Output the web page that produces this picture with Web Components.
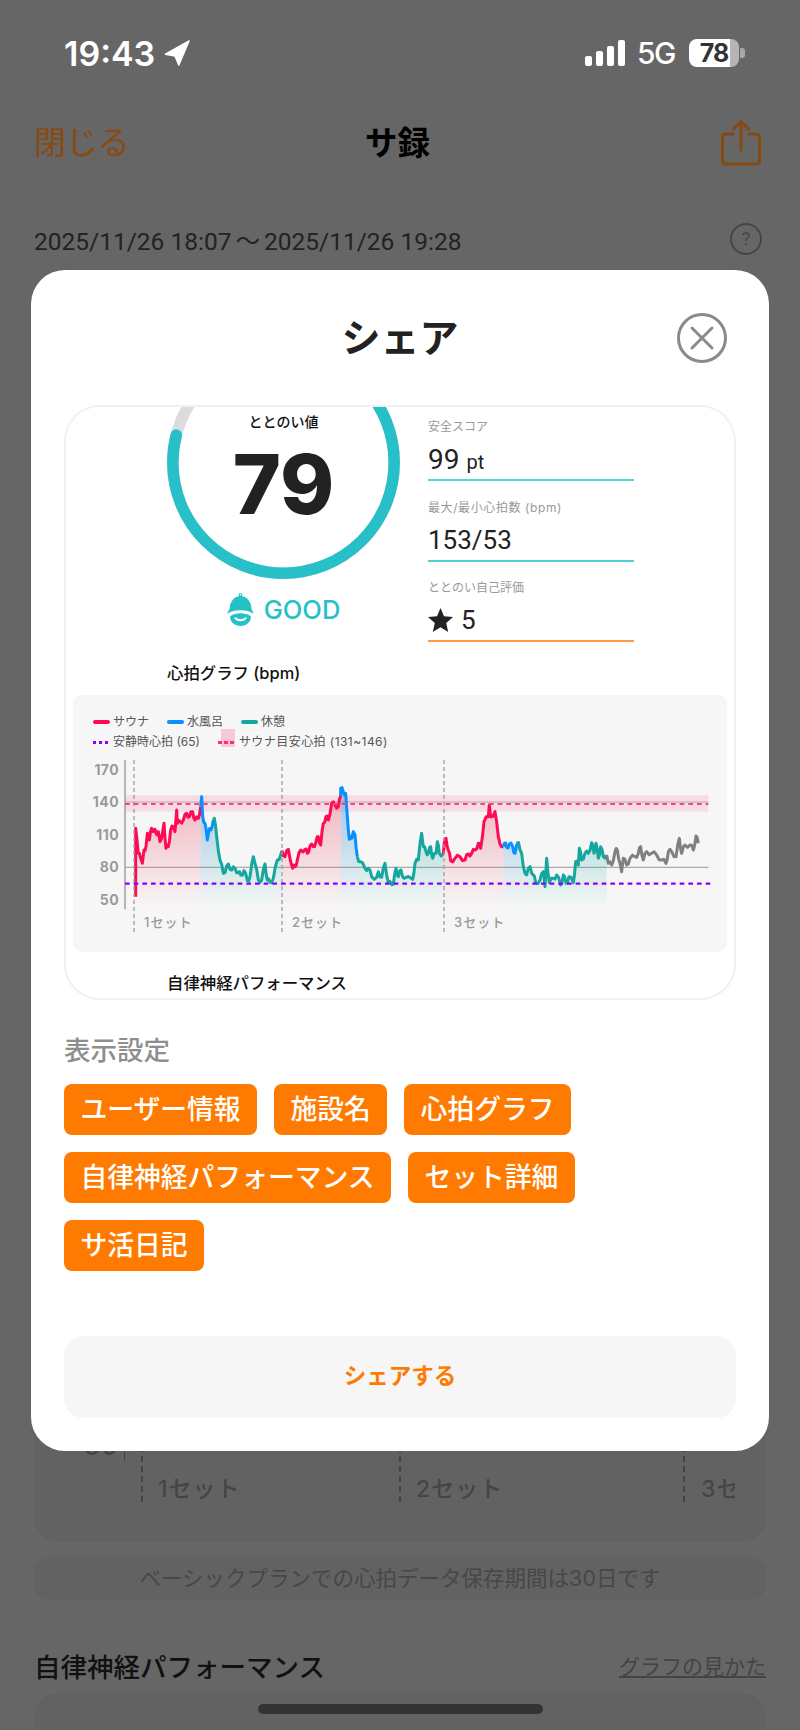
<!DOCTYPE html>
<html lang="ja">
<head>
<meta charset="utf-8">
<title>シェア</title>
<style>
  html, body { margin: 0; padding: 0; }
  body {
    width: 800px;
    height: 1730px;
    overflow: hidden;
    background: #666;
    font-family: Inter, "Noto Sans CJK JP", sans-serif;
  }
</style>
</head>
<body>
<session-screen>
  <share-modal></share-modal>
</session-screen>

<script>
const statusTemplate = document.createElement('template');
statusTemplate.innerHTML = /*html*/ `
  <style>
    :host { display: flex; align-items: center; height: 106px; padding: 0 55px 0 64px; color: #fff; box-sizing: border-box; }
    .time { font-size: 34px; font-weight: 600; }
    .arrow { margin-left: 9px; }
    .right { margin-left: auto; display: flex; align-items: center; }
    .net { font-size: 30px; margin: 0 14px 0 12px; font-weight: 500; letter-spacing: -1.5px; }
    .battery {
      position: relative; width: 50px; height: 28px; border-radius: 8px; overflow: hidden;
      background: linear-gradient(90deg, #fff 0 41px, #b5b5b5 41px);
      color: #333; font-size: 25px; font-weight: 700; line-height: 28px; text-align: center; letter-spacing: -1px;
    }
    .nub { width: 5px; height: 10px; background: #a8a8a8; border-radius: 0 3px 3px 0; margin-left: 1px; }
  </style>
  <span class="time">19:43</span>
  <svg class="arrow" width="26" height="26" viewBox="0 0 26 26"><path d="M25 1 1.500 14.200 11 16l3.800 9z" fill="#fff" stroke="#fff" stroke-width="1.500" stroke-linejoin="round"/></svg>
  <div class="right">
    <svg width="40" height="26" viewBox="0 0 40 26" fill="#fff">
      <rect x="0" y="16" width="7" height="10" rx="2"/>
      <rect x="11" y="11" width="7" height="15" rx="2"/>
      <rect x="22" y="6" width="7" height="20" rx="2"/>
      <rect x="33" y="0" width="7" height="26" rx="2"/>
    </svg>
    <span class="net">5G</span>
    <div class="battery">78</div>
    <div class="nub"></div>
  </div>
`;
class StatusBar extends HTMLElement {
  constructor() {
    super();
    this.attachShadow({ mode: 'open' }).appendChild(statusTemplate.content.cloneNode(true));
  }
}
customElements.define('status-bar', StatusBar);

const navTemplate = document.createElement('template');
navTemplate.innerHTML = /*html*/ `
  <style>
    :host { display: grid; grid-template-columns: 1fr auto 1fr; align-items: center; height: 74px; padding: 0 39px 0 34px; }
    .close { font-size: 32px; color: #8a4a0f; padding-bottom: 6px; }
    .title { font-size: 32.500px; font-weight: 700; color: #000; padding-bottom: 6px; }
    svg { justify-self: end; }
  </style>
  <span class="close">閉じる</span>
  <span class="title">サ録</span>
  <svg width="40" height="48" viewBox="0 0 40 48" fill="none" stroke="#844a10" stroke-width="3" stroke-linecap="round" stroke-linejoin="round">
    <path d="M12 15H5q-3.500 0-3.500 3.500v23q0 3.500 3.500 3.500h30q3.500 0 3.500-3.500v-23q0-3.500-3.500-3.500h-7"/>
    <path d="M20 31V3M12.500 10 20 2.500 27.500 10"/>
  </svg>
`;
class NavBar extends HTMLElement {
  constructor() {
    super();
    this.attachShadow({ mode: 'open' }).appendChild(navTemplate.content.cloneNode(true));
  }
}
customElements.define('nav-bar', NavBar);

const screenTemplate = document.createElement('template');
screenTemplate.innerHTML = /*html*/ `
  <style>
    :host { display: block; position: relative; width: 800px; height: 1730px; overflow: hidden; background: #666; }
    .date { display: flex; align-items: center; justify-content: space-between; height: 32px; margin: 43px 38px 0 34px; color: #222; font-size: 24.500px; font-family: Roboto, "Noto Sans CJK JP", sans-serif; }
    .tilde { margin: 0 4px; }
    .help { width: 28px; height: 28px; border: 2px solid #464646; border-radius: 50%; color: #464646; font-size: 19px; line-height: 28px; text-align: center; }
    .graph { position: relative; height: 1265px; margin: 22px 34px 0; background: #626262; border-radius: 24px; overflow: hidden; }
    .graph span { position: absolute; color: #454545; font-size: 23px; font-weight: 500; line-height: 28px; white-space: nowrap; letter-spacing: 1px; }
    .graph i { position: absolute; top: 0; height: 1225px; border-left: 2px dashed #444; }
    .graph b { position: absolute; left: 90px; top: 1150px; height: 34px; width: 1px; background: #444; }
    .note { margin: 15px 34px 0; height: 43px; line-height: 43px; text-align: center; background: #626262; border-radius: 16px; color: #474747; font-size: 21.500px; }
    .head { display: flex; align-items: center; justify-content: space-between; margin: 45px 34px 0; height: 40px; }
    .head strong { font-size: 26.500px; font-weight: 500; color: #111; }
    .head a { font-size: 21px; color: #444; text-decoration: underline; }
    .next { margin: 8px 34px 0; height: 60px; background: #626262; border-radius: 24px 24px 0 0; }
    .home { position: absolute; left: 258px; top: 1704px; width: 285px; height: 10px; border-radius: 5px; background: #333; }
  </style>
  <status-bar></status-bar>
  <nav-bar></nav-bar>
  <div class="date">
    <span>2025/11/26 18:07<span class="tilde">～</span>2025/11/26 19:28</span>
    <span class="help">?</span>
  </div>
  <div class="graph">
    <span style="left:50px;top:1155px;font-size:26px">50</span>
    <b></b>
    <i style="left:107px"></i><i style="left:365px"></i><i style="left:649px"></i>
    <span style="left:124px;top:1198px">1セット</span>
    <span style="left:382px;top:1198px">2セット</span>
    <span style="left:667px;top:1198px;width:34px;overflow:hidden">3セット</span>
  </div>
  <div class="note">ベーシックプランでの心拍データ保存期間は30日です</div>
  <div class="head"><strong>自律神経パフォーマンス</strong><a>グラフの見かた</a></div>
  <div class="next"></div>
  <slot></slot>
  <div class="home"></div>
`;
class SessionScreen extends HTMLElement {
  constructor() {
    super();
    this.attachShadow({ mode: 'open' }).appendChild(screenTemplate.content.cloneNode(true));
  }
}
customElements.define('session-screen', SessionScreen);

const statTemplate = document.createElement('template');
statTemplate.innerHTML = /*html*/ `
  <style>
    :host { display: block; width: 206px; height: 63px; box-sizing: border-box; border-bottom: 2px solid var(--line, #5ad6d6); }
    .label { height: 17px; font-size: 12px; line-height: 17px; color: #999; white-space: nowrap; letter-spacing: var(--label-spacing, 0); }
    .value { display: flex; align-items: center; gap: 8px; height: 38px; margin-top: 5px; font-size: 26px; color: #222; font-family: Roboto, sans-serif; }
  </style>
  <div class="label"></div>
  <div class="value"><slot></slot></div>
`;
class StatItem extends HTMLElement {
  constructor() {
    super();
    this.attachShadow({ mode: 'open' }).appendChild(statTemplate.content.cloneNode(true));
  }

  connectedCallback() {
    this.shadowRoot.querySelector('.label').textContent = this.getAttribute('label');
  }
}
customElements.define('stat-item', StatItem);

const scoreTemplate = document.createElement('template');
scoreTemplate.innerHTML = /*html*/ `
  <style>
    :host { display: flex; gap: 28px; padding-left: 101px; }
    .left { width: 233px; margin-top: -61px; }
    .ring { position: relative; width: 233px; height: 233px; }
    .ring svg { display: block; }
    .caption { position: absolute; left: 0; right: 0; top: 66px; text-align: center; font-size: 14px; font-weight: 500; line-height: 20px; color: #111; }
    .num { position: absolute; left: 0; right: 0; top: 89px; text-align: center; font-size: 82px; font-weight: 800; line-height: 100px; color: #222; }
    .good { display: flex; align-items: center; justify-content: center; gap: 10px; margin-top: 14px; color: #26c0c8; font-size: 25.500px; font-weight: 500; }
    .stats { display: flex; flex-direction: column; gap: 17.500px; margin-top: 11px; }
    .big { font-size: 28px; }
    small { font-size: 20px; }
  </style>
  <div class="left">
    <div class="ring">
      <svg width="233" height="233" viewBox="0 0 233 233" fill="none" stroke-width="11.500">
        <circle cx="116.500" cy="116.500" r="110.700" stroke="#dcdcdc"/>
        <circle cx="116.500" cy="116.500" r="110.700" stroke="#28c0c8" stroke-linecap="round" pathLength="100" stroke-dasharray="79 100" transform="rotate(-90 116.500 116.500)"/>
      </svg>
      <div class="caption">ととのい値</div>
      <div class="num">79</div>
    </div>
    <div class="good">
      <svg width="27" height="33" viewBox="0 0 26 32" fill="#26c0c8">
        <circle cx="13" cy="1.800" r="1.300" fill="none" stroke="#26c0c8" stroke-width="1"/>
        <path d="M2.500 15A10.500 12 0 0 1 23.500 15L26 20C19 15.500 7 15.500 0 20z"/>
        <path d="M3 22.500C9 18.800 17 18.800 23 22.500 23.500 28 18.500 32 13 32 7.500 32 2.500 28 3 22.500z"/>
        <path d="M8 24.500c2.500 2.500 7.500 2.500 10 0" fill="none" stroke="#fff" stroke-width="1.800" stroke-linecap="round"/>
      </svg>
      <span>GOOD</span>
    </div>
  </div>
  <div class="stats">
    <stat-item label="安全スコア" style="--line:#5ad6d6"><span class="big">99 <small>pt</small></span></stat-item>
    <stat-item label="最大/最小心拍数 (bpm)" style="--line:#4fd0d0;--label-spacing:.6px">153/53</stat-item>
    <stat-item label="ととのい自己評価" style="--line:#ff9a45">
      <svg width="25" height="24" viewBox="0 0 25 24"><path d="M12.500 0l3.500 8.300 9 .8-6.800 5.900 2 8.900-7.700-4.700-7.700 4.700 2-8.900L0 9.100l9-.8z" fill="#222"/></svg>
      <span>5</span>
    </stat-item>
  </div>
`;
class ScorePanel extends HTMLElement {
  constructor() {
    super();
    this.attachShadow({ mode: 'open' }).appendChild(scoreTemplate.content.cloneNode(true));
  }
}
customElements.define('score-panel', ScorePanel);

// curve points are x,y measured off the picture at 3x, the svg viewBox uses the same units
const SEGMENTS = [
  ['red', '197,620 197,415 200,440 205,490 212,505 217,520 222,480 228,470 232,430 238,450 245,415 252,420 258,430 265,425 270,455 278,425 282,400 288,475 295,470 302,420 310,410 315,425 320,360 322,400 330,395 340,390 350,370 358,380 368,365 375,390 385,385 392,350'],
  ['blue', '392,350 395,320 398,380 405,400 412,450 416,425 422,420 430,390'],
  ['teal', '430,390 433,385 440,440 450,510 460,550 465,548 475,522 485,540 495,535 505,548 512,555 522,542 532,572 540,560 550,500 555,520 565,570 575,570 585,522 592,570 600,577 610,565 622,510 632,495 636,482'],
  ['red', '636,482 645,500 655,478 668,535 675,530 682,510 692,480 705,478 712,490 720,468 730,470 738,455 745,440 752,465 760,400 768,380 775,390 785,340 795,345 805,350 812,318'],
  ['blue', '812,318 812,295 820,305 827,310 832,380 838,448 845,445 850,425 855,435 862,500'],
  ['teal', '862,500 870,515 885,535 895,535 905,560 920,562 925,545 935,562 945,520 955,578 965,584 970,583 978,535 985,560 993,540 1002,565 1028,568 1035,520 1045,510 1050,460 1055,430 1060,470 1068,485 1075,490 1082,470 1088,505 1098,490 1102,455 1108,490 1120,492'],
  ['red', '1120,492 1122,465 1128,445 1135,480 1142,512 1155,505 1170,500 1185,510 1195,492 1205,490 1215,480 1225,460 1232,475 1242,395 1255,380 1258,345 1262,380 1275,365 1285,440 1295,470 1300,470'],
  ['blue', '1300,470 1303,460 1310,472 1318,462 1328,470 1335,490 1345,455'],
  ['teal', '1345,455 1355,490 1360,530 1370,555 1380,530 1390,555 1397,578 1410,570 1420,545 1425,590 1430,505 1438,578 1450,565 1460,555 1472,585 1480,555 1488,580 1497,560 1510,578 1517,515 1525,525 1528,475 1535,510 1545,490 1555,490 1565,458 1572,490 1578,460 1585,505 1592,470 1600,500 1610,495'],
  ['gray', '1610,495 1615,520 1625,525 1635,485 1642,480 1650,520 1655,545 1660,505 1670,525 1680,505 1695,500 1705,490 1712,470 1720,510 1730,485 1745,490 1760,495 1775,510 1788,520 1795,485 1805,485 1818,500 1828,445 1835,490 1845,465 1860,465 1870,480 1878,438 1885,460'],
];
const STROKES = { red: '#ff0a54', blue: '#0a8fff', teal: '#16a6a0', gray: '#808080' };
const AXIS = [['170', 770], ['140', 802], ['110', 835], ['80', 867], ['50', 900]];
const SETS = [['1セット', 144, 134], ['2セット', 292, 282], ['3セット', 454, 444]];

function roughen(pts) {
  const list = pts.split(' ').map(p => p.split(',').map(Number));
  const out = [];
  list.forEach((p, i) => {
    if (i > 0) {
      const q = list[i - 1];
      if (Math.abs(p[0] - q[0]) > 5) {
        out.push(`${(p[0] + q[0]) / 2},${(p[1] + q[1]) / 2 + (i % 2 ? 7 : -7)}`);
      }
    }
    out.push(p.join(','));
  });
  return out.join(' ');
}

const chartTemplate = document.createElement('template');
chartTemplate.innerHTML = /*html*/ `
  <style>
    :host { display: block; width: 654px; height: 257px; background: #f6f6f6; border-radius: 9px; overflow: hidden; color: #555; }
    .legend { height: 60px; box-sizing: border-box; padding: 17px 0 0 20px; font-size: 12px; line-height: 20px; }
    .row { display: flex; gap: 18px; white-space: nowrap; }
    .item { display: flex; align-items: center; gap: 3px; }
    .item i { display: block; width: 17px; height: 4px; border-radius: 2px; }
    .item i.dash { height: 3px; border-radius: 0; background: repeating-linear-gradient(90deg, var(--dash) 0 3.500px, transparent 3.500px 6px); }
    .target { position: relative; gap: 4px; letter-spacing: .45px; }
    .target::before { content: ''; position: absolute; left: 3px; top: -3px; width: 14px; height: 18px; background: #f7c8d8; }
    .target i { position: relative; }
    .plot { position: relative; height: 197px; }
    svg { position: absolute; left: 0; top: 0; }
    .y, .set { position: absolute; color: #9a9a9a; line-height: 16px; white-space: nowrap; }
    .y { left: 0; width: 46px; text-align: right; font-size: 14px; font-weight: 700; letter-spacing: .4px; }
    .set { font-size: 13px; color: #999; font-weight: 500; letter-spacing: 1px; }
  </style>
  <div class="legend">
    <div class="row">
      <span class="item"><i style="background:#ff0a54"></i>サウナ</span>
      <span class="item"><i style="background:#0a8fff"></i>水風呂</span>
      <span class="item"><i style="background:#16a6a0"></i>休憩</span>
    </div>
    <div class="row">
      <span class="item"><i class="dash" style="--dash:#8a00ff"></i>安静時心拍 (65)</span>
      <span class="item target"><i class="dash" style="--dash:#ff2f75"></i>サウナ目安心拍 (131~146)</span>
    </div>
  </div>
  <div class="plot"></div>
`;
class HeartChart extends HTMLElement {
  constructor() {
    super();
    this.attachShadow({ mode: 'open' }).appendChild(chartTemplate.content.cloneNode(true));
  }

  connectedCallback() {
    const plot = this.shadowRoot.querySelector('.plot');
    let marks = '';
    for (const [kind, pts] of SEGMENTS) {
      const list = pts.split(' ');
      const first = list[0].split(',')[0];
      const last = list[list.length - 1].split(',')[0];
      marks += `<polygon points="${first},655 ${pts} ${last},655" fill="url(#fill-${kind})"/>`;
    }
    for (const [kind, pts] of SEGMENTS) {
      marks += `<polyline points="${roughen(pts)}" fill="none" stroke="${STROKES[kind]}" stroke-width="9" stroke-linejoin="round"/>`;
    }
    const sets = SETS.map(s => {
      const x = (s[2] - 70) * 3;
      return `<line x1="${x}" x2="${x}" y1="210" y2="735" stroke="#a0a0a0" stroke-width="4" stroke-dasharray="12 9"/>`;
    }).join('');
    plot.innerHTML = `
      <svg width="654" height="197" viewBox="9 195 1962 591">
        <defs>
          <linearGradient id="fill-red" gradientUnits="userSpaceOnUse" x1="0" x2="0" y1="340" y2="655"><stop offset="0" stop-color="#e8304f" stop-opacity=".3"/><stop offset="1" stop-color="#e8304f" stop-opacity="0"/></linearGradient>
          <linearGradient id="fill-blue" gradientUnits="userSpaceOnUse" x1="0" x2="0" y1="340" y2="655"><stop offset="0" stop-color="#1080c8" stop-opacity=".35"/><stop offset="1" stop-color="#1080c8" stop-opacity="0"/></linearGradient>
          <linearGradient id="fill-teal" gradientUnits="userSpaceOnUse" x1="0" x2="0" y1="340" y2="655"><stop offset="0" stop-color="#10a8a0" stop-opacity=".4"/><stop offset="1" stop-color="#10a8a0" stop-opacity="0"/></linearGradient>
          <linearGradient id="fill-gray"><stop stop-opacity="0"/></linearGradient>
        </defs>
        <rect x="165" y="316" width="1750" height="49" fill="#ff3d7f" fill-opacity=".14"/>
        <line x1="165" x2="1915" y1="336" y2="336" stroke="#aaa" stroke-width="3"/>
        <line x1="165" x2="1915" y1="532" y2="532" stroke="#aaa" stroke-width="4"/>
        ${marks}
        <line x1="165" x2="165" y1="210" y2="658" stroke="#a8a8a8" stroke-width="5"/>
        ${sets}
        <line x1="165" x2="1915" y1="342" y2="342" stroke="#ff3d7f" stroke-width="6.500" stroke-dasharray="14 12"/>
        <line x1="165" x2="1922" y1="581" y2="581" stroke="#8a00ff" stroke-width="6.500" stroke-dasharray="14 12"/>
      </svg>
    `;
    const top = 755;
    for (const [text, y] of AXIS) {
      const el = document.createElement('span');
      el.className = 'y';
      el.style.top = `${y - 8 - top}px`;
      el.textContent = text;
      plot.appendChild(el);
    }
    for (const [text, x] of SETS) {
      const el = document.createElement('span');
      el.className = 'set';
      el.style.left = `${x - 73}px`;
      el.style.top = `${922 - 8 - top}px`;
      el.textContent = text;
      plot.appendChild(el);
    }
  }
}
customElements.define('heart-chart', HeartChart);

const chipTemplate = document.createElement('template');
chipTemplate.innerHTML = /*html*/ `
  <style>
    :host { display: block; height: 51px; padding: 0 16.400px; border-radius: 8px; background: #ff7a00; color: #fff; font-size: 26.800px; font-weight: 500; line-height: 50px; white-space: nowrap; }
  </style>
  <slot></slot>
`;
class ToggleChip extends HTMLElement {
  constructor() {
    super();
    this.attachShadow({ mode: 'open' }).appendChild(chipTemplate.content.cloneNode(true));
  }
}
customElements.define('toggle-chip', ToggleChip);

const modalTemplate = document.createElement('template');
modalTemplate.innerHTML = /*html*/ `
  <style>
    :host { display: block; position: absolute; left: 31px; top: 270px; width: 738px; height: 1181px; box-sizing: border-box; padding: 0 33px; background: #fff; border-radius: 34px; color: #222; }
    header { position: relative; height: 135px; display: flex; align-items: center; justify-content: center; box-sizing: border-box; padding-bottom: 5px; }
    h1 { margin: 0; font-size: 39px; font-weight: 700; color: #222; }
    .x { position: absolute; right: 9px; top: 43px; }
    .preview { height: 595px; box-sizing: border-box; border: 2px solid #f1f1f1; border-radius: 36px; overflow: hidden; }
    .heading { height: 24px; margin: 0 0 0 101px; font-size: 16.400px; font-weight: 500; line-height: 24px; color: #111; }
    heart-chart { margin: 10px 0 0 7px; }
    h2 { margin: 30px 0 0; font-size: 26.500px; font-weight: 500; line-height: 40px; color: #8e8e8e; }
    .chips { display: flex; flex-wrap: wrap; gap: 17px; margin-top: 14px; padding-right: 10px; }
    .share { display: block; height: 82px; margin-top: 65px; border-radius: 20px; background: #f6f6f6; color: #ff7a00; font-size: 22.500px; font-weight: 700; line-height: 80px; text-align: center; }
  </style>
  <header>
    <h1>シェア</h1>
    <svg class="x" width="50" height="50" viewBox="0 0 50 50" fill="none" stroke="#8a8a8a" stroke-width="3">
      <circle cx="25" cy="25" r="23.500"/>
      <path d="M15 15 35 35M35 15 15 35" stroke-linecap="round"/>
    </svg>
  </header>
  <div class="preview">
    <score-panel></score-panel>
    <div class="heading" style="margin-top:19px">心拍グラフ (bpm)</div>
    <heart-chart></heart-chart>
    <div class="heading" style="margin-top:19px">自律神経パフォーマンス</div>
  </div>
  <h2>表示設定</h2>
  <div class="chips">
    <toggle-chip>ユーザー情報</toggle-chip>
    <toggle-chip>施設名</toggle-chip>
    <toggle-chip>心拍グラフ</toggle-chip>
    <toggle-chip>自律神経パフォーマンス</toggle-chip>
    <toggle-chip>セット詳細</toggle-chip>
    <toggle-chip>サ活日記</toggle-chip>
  </div>
  <a class="share">シェアする</a>
`;
class ShareModal extends HTMLElement {
  constructor() {
    super();
    this.attachShadow({ mode: 'open' }).appendChild(modalTemplate.content.cloneNode(true));
  }
}
customElements.define('share-modal', ShareModal);
</script>
</body>
</html>
